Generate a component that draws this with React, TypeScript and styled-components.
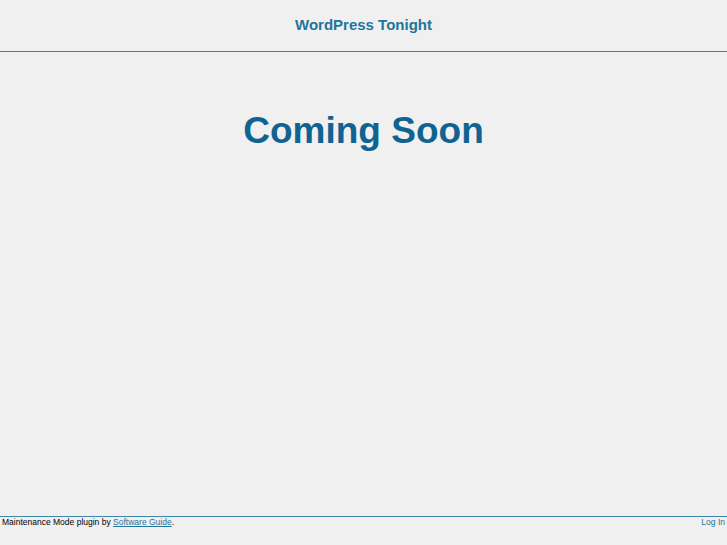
import React from "react";
import styled, { createGlobalStyle } from "styled-components";

const Global = createGlobalStyle`
  html, body { margin: 0; padding: 0; height: 100%; }
  body {
    background: #f0f0f0;
    font-family: "Liberation Sans", Arial, Helvetica, sans-serif;
  }
  #root { min-height: 100%; }
`;

const Page = styled.div`
  min-height: 100vh;
  display: flex;
  flex-direction: column;
  box-sizing: border-box;
`;

const Header = styled.header`
  height: 52px;
  box-sizing: border-box;
  border-bottom: 1px solid #3f86ad;
  display: flex;
  align-items: center;
  justify-content: center;
  padding-bottom: 2px;
`;

const SiteTitle = styled.a`
  font-size: 15px;
  font-weight: bold;
  color: #21759b;
  text-decoration: none;
`;

const Main = styled.main`
  flex: 1;
  display: flex;
  flex-direction: column;
  align-items: center;
  padding-top: 57px;
`;

const Heading = styled.h1`
  margin: 0;
  font-size: 37px;
  font-weight: bold;
  color: #0f6391;
  line-height: 44px;
`;

const Footer = styled.footer`
  border-top: 1px solid #3f86ad;
  height: 29px;
  box-sizing: border-box;
  display: flex;
  justify-content: space-between;
  align-items: flex-start;
  padding: 0 2px;
  font-size: 8.5px;
  line-height: 11px;
  color: #000;
`;

const FooterLink = styled.a<{ $underline?: boolean }>`
  color: #21759b;
  text-decoration: ${(p) => (p.$underline ? "underline" : "none")};
`;

export default function App() {
  return (
    <Page>
      <Global />
      <Header>
        <SiteTitle href="#">WordPress Tonight</SiteTitle>
      </Header>
      <Main>
        <Heading>Coming Soon</Heading>
      </Main>
      <Footer>
        <span>
          Maintenance Mode plugin by{" "}
          <FooterLink $underline href="#">Software Guide</FooterLink>.
        </span>
        <FooterLink href="#">Log In</FooterLink>
      </Footer>
    </Page>
  );
}
